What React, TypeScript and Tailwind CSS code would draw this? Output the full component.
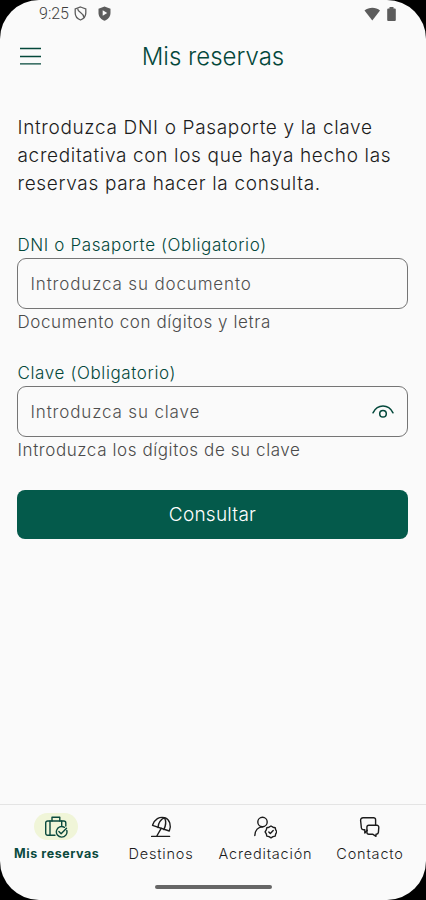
import type { ReactNode } from 'react';

function BlockedShield() {
  return (
    <svg width="13" height="15" viewBox="0 0 13 15" fill="none" stroke="#5c5c5c" strokeWidth="1.3">
      <path d="M6.5 1 11.800 3v4c0 3.200-2.200 5.800-5.300 7C3.400 12.800 1.200 10.200 1.200 7V3z" />
      <path d="M3.600 2.500C3.600 6.500 9.800 6.500 9.800 11.200" />
    </svg>
  );
}

function PlayShield() {
  return (
    <svg width="13" height="15" viewBox="0 0 13 15">
      <path d="M6.500.400 12.500 2.700V7c0 3.600-2.500 6.500-6 7.700C3 13.500.500 10.600.500 7V2.700z" fill="#5c5c5c" />
      <path d="M4.700 4.200v5.600L9.200 7z" fill="#fafafa" />
    </svg>
  );
}

function EyeIcon() {
  return (
    <svg width="24" height="24" viewBox="0 0 24 24" fill="none" stroke="#04483b" strokeWidth="1.500" strokeLinecap="round">
      <path d="M2 12.800C4.200 8.600 7.800 6.100 12 6.100s7.800 2.500 10 6.700" />
      <circle cx="12" cy="13.800" r="3.300" />
    </svg>
  );
}

function SuitcaseIcon() {
  return (
    <svg width="24" height="24" viewBox="0 0 24 24" fill="none" stroke="#0b4a3e" strokeWidth="1.400" strokeLinecap="round" strokeLinejoin="round">
      <path d="M11 20.300H3.700a2 2 0 0 1-2-2V8a2 2 0 0 1 2-2h16.100a2 2 0 0 1 2 2v3" />
      <path d="M8 6V2.200h7.800V6M6 6v14.300M17.700 6v4.500" />
      <path d="M22.800 15.500a5.300 5.300 0 1 1-2.400-3.200" />
      <path d="m14.900 16.600 2.200 2.200 5.400-5.600" />
    </svg>
  );
}

function ParasolIcon() {
  return (
    <svg width="24" height="24" viewBox="0 0 24 24" fill="none" stroke="#1c1c1c" strokeWidth="1.400" strokeLinecap="round" strokeLinejoin="round">
      <path d="M3.500 10.300C5.500 4.200 10.500 1.300 15.600 2.700c5.200 1.600 7 7.800 4.700 13.300z" />
      <path d="M9 12.500C9.300 8 11.600 4.600 15.600 2.700M14.800 14.600C16.800 10.800 17.200 6.300 15.600 2.700" />
      <path d="M12.200 13.300 7.800 21M2.600 21.400h18" />
    </svg>
  );
}

function VerifiedUserIcon() {
  return (
    <svg width="24" height="24" viewBox="0 0 24 24" fill="none" stroke="#1c1c1c" strokeWidth="1.400" strokeLinecap="round" strokeLinejoin="round">
      <circle cx="9.500" cy="7" r="4.700" />
      <path d="M1.800 20.600c0-5.400 3.500-8.900 8.100-8.900" />
      <path d="m18 11 2 1.200 2.200.500.500 2.200 1.200 2-1.200 2-.500 2.200-2.200.500-2 1.200-2-1.200-2.200-.500-.500-2.200-1.200-2 1.200-2 .500-2.200 2.200-.500z" />
      <path d="m15.800 16.900 1.500 1.500 2.900-3" />
    </svg>
  );
}

function ChatIcon() {
  return (
    <svg width="24" height="24" viewBox="0 0 24 24" fill="none" stroke="#1c1c1c" strokeWidth="1.400" strokeLinecap="round" strokeLinejoin="round">
      <path d="M9.300 15.200 6.800 18v-3.300H5.300a2 2 0 0 1-1.900-1.700L2.600 5.500a2.500 2.500 0 0 1 2.500-2.800h10.500a2 2 0 0 1 2 2v5.500" />
      <path d="M10.900 10.200h7.900a2 2 0 0 1 2 2.200l-.400 5a2 2 0 0 1-2 1.800h-.400V21.300l-3.400-2.100h-3.700a2 2 0 0 1-2-2v-5a2 2 0 0 1 2-2z" />
    </svg>
  );
}

function Field({ label, placeholder, help, children }: { label: string; placeholder: string; help: string; children?: ReactNode }) {
  return (
    <label className="flex flex-col font-light">
      <span className="h-[22px] pl-[0.5px] text-[17px] leading-[19px] tracking-[0.62px] text-[#04483b]">{label}</span>
      <div className="flex h-[51px] items-center rounded-[9px] border border-[#757575] pr-3 pl-[12.5px]">
        <input
          placeholder={placeholder}
          className="min-w-0 flex-1 bg-transparent pt-[2px] text-[17px] tracking-[0.85px] outline-none placeholder:text-[#4f4f4f] placeholder:opacity-100"
        />
        {children}
      </div>
      <span className="h-[27px] pl-[0.5px] text-[17px] leading-[26px] tracking-[0.59px] text-[#4a4a4a]">{help}</span>
    </label>
  );
}

const tabs = [
  { label: 'Mis reservas', icon: <SuitcaseIcon />, active: true },
  { label: 'Destinos', icon: <ParasolIcon />, active: false },
  { label: 'Acreditación', icon: <VerifiedUserIcon />, active: false },
  { label: 'Contacto', icon: <ChatIcon />, active: false },
];

export default function App() {
  return (
    <div className="h-[900px] w-[426px] bg-black font-['Inter',sans-serif]">
      <div className="flex h-full flex-col overflow-hidden rounded-[39px] bg-[#fafafa]">
        {/* Barra de estado */}
        <div className="flex h-[27px] items-center justify-between pr-[30px] pl-[39px]">
          <div className="flex items-center">
            <span className="w-[35px] font-['Roboto',sans-serif] text-base font-light text-[#3c3c3c]">9:25</span>
            <BlockedShield />
            <div className="w-[11px]" />
            <PlayShield />
          </div>
          <div className="flex items-center gap-[7px]">
            <svg width="16" height="14" viewBox="0 0 16 14">
              <path d="M.5 3.500C5-.200 11.800-.200 16 3.500L8.300 13.500z" fill="#5c5c5c" />
            </svg>
            <svg width="9" height="14" viewBox="0 0 9 14">
              <path d="M2.500 0h4v1.500h1.300q1 0 1 1V13q0 1-1 1H1.200q-1 0-1-1V2.500q0-1 1-1h1.300z" fill="#5c5c5c" />
            </svg>
          </div>
        </div>

        {/* Cabecera */}
        <header className="grid h-[58px] grid-cols-[1fr_auto_1fr] items-center px-5">
          <button aria-label="Menú" className="w-[21px]">
            <svg width="21" height="18" viewBox="0 0 21 18" stroke="#04483b" strokeWidth="1.300">
              <path d="M0 1.500h21M0 9.500h21M0 16.900h21" />
            </svg>
          </button>
          <h1 className="pt-[2px] text-2xl font-light text-[#04483b]">Mis reservas</h1>
        </header>

        <main className="flex flex-1 flex-col pt-[29px] pr-[18px] pl-[17px]">
          <p className="pl-[0.5px] text-[19px] leading-7 font-light tracking-[0.66px] whitespace-nowrap text-[#1c1c1c]">
            Introduzca DNI o Pasaporte y la clave
            <br />
            acreditativa con los que haya hecho las
            <br />
            reservas para hacer la consulta.
          </p>
          <div className="mt-[38px] flex flex-col gap-7">
            <Field label="DNI o Pasaporte (Obligatorio)" placeholder="Introduzca su documento" help="Documento con dígitos y letra" />
            <Field label="Clave (Obligatorio)" placeholder="Introduzca su clave" help="Introduzca los dígitos de su clave">
              <EyeIcon />
            </Field>
          </div>
          <button className="mt-[25.5px] h-[49.5px] rounded-lg bg-[#045a4b] pt-[2px] text-[19px] font-[350] tracking-[0.25px] text-white">Consultar</button>
        </main>

        {/* Navegación inferior */}
        <nav className="flex h-[72px] justify-center border-t border-[#e4e4e4] pt-2">
          {tabs.map((tab) => (
            <div key={tab.label} className="flex w-[104.5px] flex-col items-center">
              <div className={`flex h-[27px] w-11 items-center justify-center rounded-full ${tab.active ? 'bg-[#f0f5d8]' : ''}`}>{tab.icon}</div>
              <span
                className={`whitespace-nowrap ${tab.active ? 'mt-[5px] pl-px text-[12.5px] font-bold tracking-[0.56px] text-[#0b4a3e]' : 'mt-[3px] pl-[0.5px] text-[14.5px] font-light tracking-[0.8px] text-[#1c1c1c]'}`}
              >
                {tab.label}
              </span>
            </div>
          ))}
        </nav>
        <div className="flex h-6 justify-center pt-[9px]">
          <div className="h-1 w-[117px] rounded-full bg-[#666]" />
        </div>
      </div>
    </div>
  );
}
